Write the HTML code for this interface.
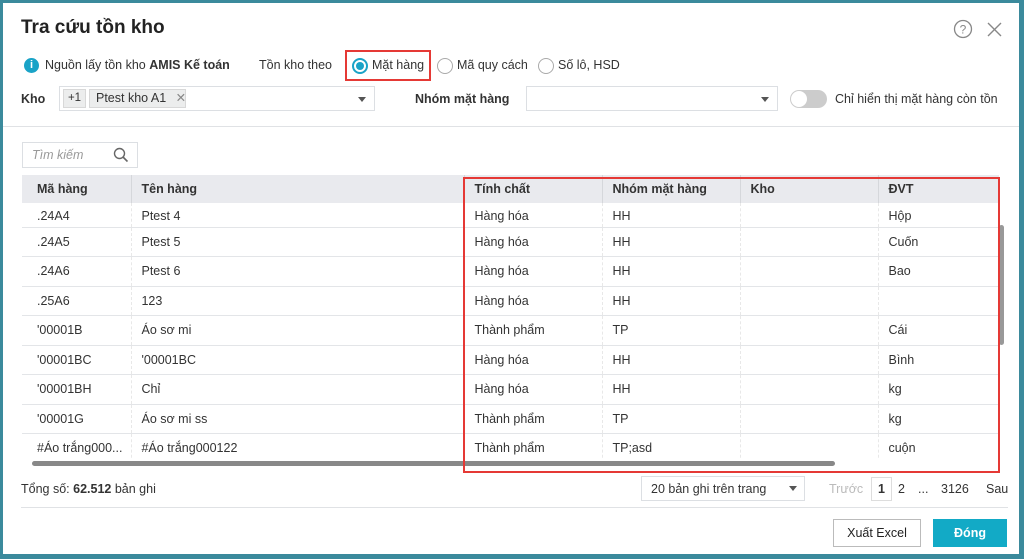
<!DOCTYPE html>
<html><head><meta charset="utf-8"><style>
*{box-sizing:border-box;margin:0;padding:0}
body{width:1024px;height:559px;background:#3b8a9c;font-family:"Liberation Sans",sans-serif;font-size:12.5px;color:#333;position:relative;overflow:hidden}
.dlg{position:absolute;left:3px;top:3px;width:1016px;height:551px;background:#fff}
.a{position:absolute;white-space:nowrap}
.radio{position:absolute;width:16px;height:16px;border:1px solid #aaa;border-radius:50%;background:#fff}
.radio.on{border:2px solid #1aa3c7}
.radio.on::after{content:"";position:absolute;left:2px;top:2px;width:8px;height:8px;border-radius:50%;background:#1aa3c7}
.box{position:absolute;border:1px solid #dcdfe3;background:#fff}
.tri{position:absolute;width:0;height:0;border-left:4px solid transparent;border-right:4px solid transparent;border-top:5px solid #555}
table{position:absolute;left:22px;top:175px;border-collapse:collapse;table-layout:fixed}
td,th{height:29.5px;padding:0 9px;text-align:left;white-space:nowrap;overflow:hidden;font-size:12.5px}
th{background:#e9eaee;font-weight:bold;height:28px;border-left:1px solid #d5d7db}
td{border-bottom:1px solid #e3e5e8;border-left:1px dashed #e8e8e8}
tr.f td{height:24px;padding-top:2px}
.red{position:absolute;border:2px solid #e53935}
</style></head><body>
<div class="dlg"></div>
<div class="a" style="left:21px;top:17px;font-size:19px;font-weight:bold;color:#222">Tra cứu tồn kho</div>
<svg class="a" style="left:953px;top:19px" width="20" height="20" viewBox="0 0 20 20"><circle cx="10" cy="10" r="8.5" fill="none" stroke="#888" stroke-width="1.3"/><text x="10" y="14.5" font-size="12" text-anchor="middle" fill="#888" font-family="Liberation Sans">?</text></svg>
<svg class="a" style="left:987px;top:22px" width="15" height="15"><path d="M1 1L14 14M14 1L1 14" stroke="#888" stroke-width="1.4"/></svg>
<div class="a" style="left:24px;top:58px;width:15px;height:15px;border-radius:50%;background:#1aa3c7;color:#fff;font-size:11px;font-weight:bold;text-align:center;line-height:15px">i</div>
<div class="a" style="left:45px;top:58px">Nguồn lấy tồn kho <b>AMIS Kế toán</b></div>
<div class="a" style="left:259px;top:58px">Tồn kho theo</div>
<div class="radio on" style="left:352px;top:58px"></div>
<div class="a" style="left:372px;top:58px">Mặt hàng</div>
<div class="red" style="left:345px;top:50px;width:86px;height:31px"></div>
<div class="radio" style="left:437px;top:58px"></div>
<div class="a" style="left:457px;top:58px">Mã quy cách</div>
<div class="radio" style="left:538px;top:58px"></div>
<div class="a" style="left:558px;top:58px">Số lô, HSD</div>
<div class="a" style="left:21px;top:92px;font-weight:bold">Kho</div>
<div class="box" style="left:59px;top:86px;width:316px;height:25px"></div>
<div class="a" style="left:63px;top:89px;width:23px;height:19px;background:#eceded;border:1px solid #d8d8d8;text-align:center;line-height:17px;font-size:11.5px">+1</div>
<div class="a" style="left:89px;top:89px;width:97px;height:19px;background:#eceded;border:1px solid #d8d8d8;line-height:17px;padding-left:6px">Ptest kho A1 <span style="color:#888;margin-left:6px">✕</span></div>
<div class="tri" style="left:358px;top:97px"></div>
<div class="a" style="left:415px;top:92px;font-weight:bold">Nhóm mặt hàng</div>
<div class="box" style="left:526px;top:86px;width:252px;height:25px"></div>
<div class="tri" style="left:761px;top:97px"></div>
<div class="a" style="left:790px;top:90px;width:37px;height:18px;border-radius:9px;background:#ccc"><div style="position:absolute;left:1px;top:1px;width:16px;height:16px;border-radius:50%;background:#fff"></div></div>
<div class="a" style="left:835px;top:92px">Chỉ hiển thị mặt hàng còn tồn</div>
<div class="a" style="left:3px;top:126px;width:1016px;height:1px;background:#e0e2e5"></div>
<div class="box" style="left:22px;top:142px;width:116px;height:26px"></div>
<div class="a" style="left:32px;top:148px;font-style:italic;color:#999">Tìm kiếm</div>
<svg class="a" style="left:113px;top:147px" width="16" height="16"><circle cx="6.5" cy="6.5" r="5" fill="none" stroke="#666" stroke-width="1.4"/><path d="M10 10L14.5 14.5" stroke="#666" stroke-width="1.6"/></svg>
<table>
<colgroup><col style="width:108px"><col style="width:333px"><col style="width:138px"><col style="width:138px"><col style="width:138px"><col style="width:120px"></colgroup>
<tr><th style="border-left:none;padding-left:15px">Mã hàng</th><th>Tên hàng</th><th>Tính chất</th><th>Nhóm mặt hàng</th><th>Kho</th><th>ĐVT</th></tr>
<tr class="f"><td style="padding-left:15px;border-left:none">.24A4</td><td>Ptest 4</td><td>Hàng hóa</td><td>HH</td><td></td><td>Hộp</td></tr>
<tr><td style="padding-left:15px;border-left:none">.24A5</td><td>Ptest 5</td><td>Hàng hóa</td><td>HH</td><td></td><td>Cuốn</td></tr>
<tr><td style="padding-left:15px;border-left:none">.24A6</td><td>Ptest 6</td><td>Hàng hóa</td><td>HH</td><td></td><td>Bao</td></tr>
<tr><td style="padding-left:15px;border-left:none">.25A6</td><td>123</td><td>Hàng hóa</td><td>HH</td><td></td><td></td></tr>
<tr><td style="padding-left:15px;border-left:none">'00001B</td><td>Áo sơ mi</td><td>Thành phẩm</td><td>TP</td><td></td><td>Cái</td></tr>
<tr><td style="padding-left:15px;border-left:none">'00001BC</td><td>'00001BC</td><td>Hàng hóa</td><td>HH</td><td></td><td>Bình</td></tr>
<tr><td style="padding-left:15px;border-left:none">'00001BH</td><td>Chỉ</td><td>Hàng hóa</td><td>HH</td><td></td><td>kg</td></tr>
<tr><td style="padding-left:15px;border-left:none">'00001G</td><td>Áo sơ mi ss</td><td>Thành phẩm</td><td>TP</td><td></td><td>kg</td></tr>
<tr><td style="padding-left:15px;border-left:none">#Áo trắng000...</td><td>#Áo trắng000122</td><td>Thành phẩm</td><td>TP;asd</td><td></td><td>cuộn</td></tr>
</table>
<div class="a" style="left:22px;top:458px;width:976px;height:12px;background:#fff"></div>
<div class="a" style="left:32px;top:461px;width:803px;height:5px;border-radius:3px;background:#888"></div>
<div class="a" style="left:999px;top:225px;width:5px;height:120px;border-radius:3px;background:#999"></div>
<div class="red" style="left:463px;top:177px;width:537px;height:296px"></div>
<div class="a" style="left:21px;top:482px">Tổng số: <b>62.512</b> bản ghi</div>
<div class="box" style="left:641px;top:476px;width:164px;height:25px"></div>
<div class="a" style="left:651px;top:482px">20 bản ghi trên trang</div>
<div class="tri" style="left:789px;top:486px"></div>
<div class="a" style="left:829px;top:482px;color:#bbb">Trước</div>
<div class="a" style="left:871px;top:477px;width:21px;height:24px;border:1px solid #ddd;text-align:center;line-height:22px;font-weight:bold">1</div>
<div class="a" style="left:898px;top:482px">2</div>
<div class="a" style="left:918px;top:482px">...</div>
<div class="a" style="left:941px;top:482px">3126</div>
<div class="a" style="left:986px;top:482px">Sau</div>
<div class="a" style="left:21px;top:507px;width:987px;height:1px;background:#e0e2e5"></div>
<div class="a" style="left:833px;top:519px;width:88px;height:28px;border:1px solid #bbb;text-align:center;line-height:26px;color:#222">Xuất Excel</div>
<div class="a" style="left:933px;top:519px;width:74px;height:28px;background:#12aac6;color:#fff;font-weight:bold;text-align:center;line-height:28px">Đóng</div>
</body></html>
